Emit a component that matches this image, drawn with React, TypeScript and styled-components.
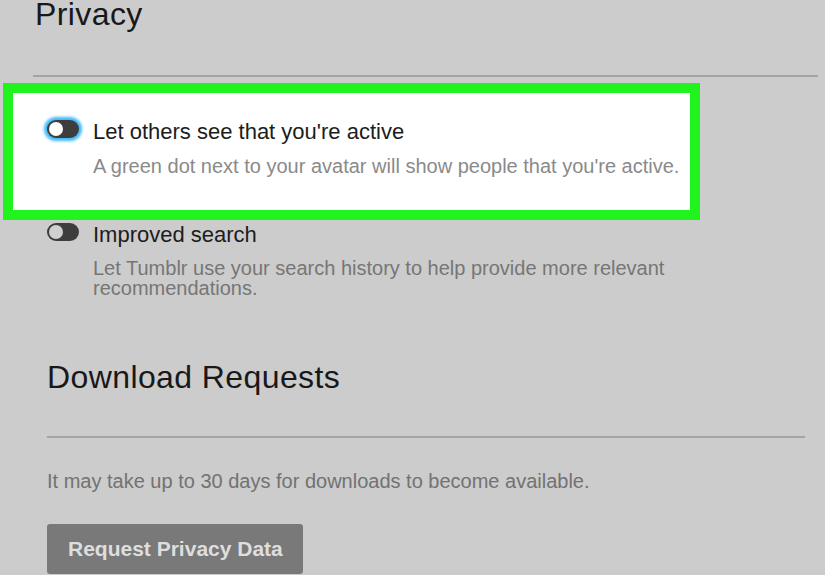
import React from "react";
import styled, { createGlobalStyle, css } from "styled-components";

const GlobalStyle = createGlobalStyle`
  html, body {
    margin: 0;
    padding: 0;
    background: #cccccc;
  }
  body {
    font-family: "Liberation Sans", Arial, sans-serif;
    -webkit-font-smoothing: antialiased;
  }
  * { box-sizing: border-box; }
`;

const Page = styled.div`
  width: 825px;
  height: 575px;
  overflow: hidden;
  background: #cccccc;
  display: flex;
  flex-direction: column;
`;

const PrivacyHeader = styled.header`
  padding: 0 7px 0 33px;
  display: flex;
  flex-direction: column;
`;

const Title = styled.h2<{ $indent?: number; $top?: number }>`
  margin: ${(p) => p.$top ?? 0}px 0 0;
  padding-left: ${(p) => p.$indent ?? 0}px;
  font-size: 32px;
  line-height: 32px;
  letter-spacing: 0.4px;
  font-weight: 400;
  color: #181818;
`;

const Divider = styled.hr<{ $top: number }>`
  margin: ${(p) => p.$top}px 0 0;
  border: 0;
  height: 2px;
  background: #a4a4a4;
`;

const HighlightBox = styled.div`
  margin: 6px 0 0 3px;
  width: 697px;
  border: 10px solid #1ff41f;
  background: #ffffff;
  padding: 26px 0 34px 34px;
`;

const SettingRow = styled.div<{ $top?: number; $left?: number }>`
  display: grid;
  grid-template-columns: 46px 1fr;
  margin-top: ${(p) => p.$top ?? 0}px;
  padding-left: ${(p) => p.$left ?? 0}px;
`;

const ToggleCell = styled.div`
  padding-top: 1px;
`;

const Toggle = styled.div<{ $focused?: boolean; $knob: string }>`
  position: relative;
  width: 32px;
  height: 18px;
  border-radius: 9px;
  background: #3d3d3d;
  ${(p) =>
    p.$focused &&
    css`
      box-shadow: 0 0 3px 3px #41b9f8;
    `}

  &::after {
    content: "";
    position: absolute;
    left: 2px;
    top: 2px;
    width: 14px;
    height: 14px;
    border-radius: 50%;
    background: ${(p) => p.$knob};
  }
`;

const TextCol = styled.div`
  display: flex;
  flex-direction: column;
`;

const Label = styled.div`
  font-size: 22px;
  line-height: 26px;
  color: #1c1c1c;
`;

const Description = styled.div<{ $color: string; $top: number }>`
  margin-top: ${(p) => p.$top}px;
  font-size: 20px;
  line-height: 20px;
  color: ${(p) => p.$color};
  max-width: 600px;
`;

const DownloadSection = styled.section`
  margin-top: 63px;
  padding: 0 20px 0 47px;
  display: flex;
  flex-direction: column;
  align-items: flex-start;
`;

const FullDivider = styled(Divider)`
  align-self: stretch;
`;

const BodyText = styled.p`
  margin: 33px 0 0;
  font-size: 20px;
  line-height: 20px;
  color: #727272;
`;

const RequestButton = styled.button`
  margin-top: 33px;
  width: 256px;
  height: 50px;
  border: 0;
  border-radius: 3px;
  background: #797979;
  color: #dedede;
  font-family: "Liberation Sans", Arial, sans-serif;
  font-weight: 700;
  font-size: 21px;
  text-align: left;
  padding: 0 0 0 21px;
  line-height: 50px;
`;

export default function App() {
  return (
    <Page>
      <GlobalStyle />
      <PrivacyHeader>
        <Title $indent={2} $top={-2}>Privacy</Title>
        <Divider $top={45} />
      </PrivacyHeader>

      <HighlightBox>
        <SettingRow>
          <ToggleCell>
            <Toggle $focused $knob="#ffffff" />
          </ToggleCell>
          <TextCol>
            <Label>Let others see that you're active</Label>
            <Description $color="#8a8a8a" $top={11}>
              A green dot next to your avatar will show people that you're active.
            </Description>
          </TextCol>
        </SettingRow>
      </HighlightBox>

      <SettingRow $top={2} $left={47}>
        <ToggleCell>
          <Toggle $knob="#d0d0d0" />
        </ToggleCell>
        <TextCol>
          <Label>Improved search</Label>
          <Description $color="#767676" $top={10}>
            Let Tumblr use your search history to help provide more relevant
            recommendations.
          </Description>
        </TextCol>
      </SettingRow>

      <DownloadSection>
        <Title>Download Requests</Title>
        <FullDivider $top={43} />
        <BodyText>It may take up to 30 days for downloads to become available.</BodyText>
        <RequestButton>Request Privacy Data</RequestButton>
      </DownloadSection>
    </Page>
  );
}
